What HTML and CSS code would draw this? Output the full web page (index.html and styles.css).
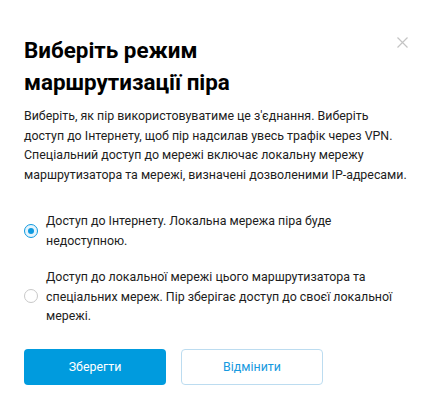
FILE: index.html
```html
<!DOCTYPE html>
<html lang="uk">
<head>
  <meta charset="UTF-8">
  <title>Режим маршрутизації піра</title>
  <link rel="stylesheet" href="styles.css">
</head>
<body>
  <div class="dialog">
    <!-- Header -->
    <div class="dialog-header">
      <h1 class="title">Виберіть режим маршрутизації піра</h1>
      <button class="close" aria-label="Закрити">
        <svg width="11" height="11" viewBox="0 0 11 11">
          <path d="M0.5 0.5 L10.5 10.5 M10.5 0.5 L0.5 10.5" stroke="#c4c4c4" stroke-width="1.2" fill="none"/>
        </svg>
      </button>
    </div>

    <p class="description">Виберіть, як пір використовуватиме це з'єднання. Виберіть доступ до Інтернету, щоб пір надсилав увесь трафік через VPN. Спеціальний доступ до мережі включає локальну мережу маршрутизатора та мережі, визначені дозволеними IP-адресами.</p>

    <!-- Options -->
    <div class="options">
      <label class="option">
        <input type="radio" name="mode" checked>
        <span class="radio"></span>
        <span class="option-text">Доступ до Інтернету. Локальна мережа піра буде недоступною.</span>
      </label>
      <label class="option">
        <input type="radio" name="mode">
        <span class="radio"></span>
        <span class="option-text">Доступ до локальної мережі цього маршрутизатора та спеціальних мереж. Пір зберігає доступ до своєї локальної мережі.</span>
      </label>
    </div>

    <!-- Buttons -->
    <div class="actions">
      <button class="btn btn-primary">Зберегти</button>
      <button class="btn btn-secondary">Відмінити</button>
    </div>
  </div>
</body>
</html>
```

FILE: styles.css
```css
/* General */
body {
  margin: 0;
  background: #fff;
  font-family: Roboto, "Liberation Sans", sans-serif;
  color: #222;
}

.dialog {
  width: 386px;
  padding: 34px 24px 20px 24px;
}

/* Header */
.dialog-header {
  display: flex;
  justify-content: space-between;
  align-items: flex-start;
}

.title {
  margin: 0;
  font-size: 22.4px;
  font-weight: 700;
  line-height: 32px;
  color: #000;
  width: 270px;
}

.close {
  background: none;
  border: none;
  padding: 0;
  margin-top: 3px;
  margin-right: 2px;
  cursor: pointer;
  line-height: 0;
}

.description {
  margin: 8px 0 0 0;
  font-size: 12.4px;
  line-height: 19.5px;
  color: #1d1d1d;
}

/* Options */
.options {
  margin-top: 27px;
  display: flex;
  flex-direction: column;
  gap: 17px;
}

.option {
  display: flex;
  align-items: center;
  cursor: pointer;
}

.option input {
  display: none;
}

.radio {
  flex: none;
  width: 14px;
  height: 14px;
  border: 1px solid #c8c8c8;
  border-radius: 50%;
  box-sizing: border-box;
  margin-right: 8px;
  position: relative;
}

.option input:checked + .radio {
  border-color: #0f9ae0;
  background: #e6f4fc;
}

.option input:checked + .radio::after {
  content: "";
  position: absolute;
  left: 3px;
  top: 3px;
  width: 6px;
  height: 6px;
  border-radius: 50%;
  background: #0f9ae0;
}

.option-text {
  font-size: 12.4px;
  line-height: 19.5px;
  color: #1d1d1d;
  padding-right: 10px;
}

/* Buttons */
.actions {
  margin-top: 23px;
  display: flex;
  gap: 15px;
}

.btn {
  width: 142px;
  height: 36px;
  border-radius: 4px;
  font-family: Roboto, "Liberation Sans", sans-serif;
  font-size: 12.4px;
  cursor: pointer;
}

.btn-primary {
  background: #009bde;
  border: none;
  color: #fff;
}

.btn-secondary {
  background: #fff;
  border: 1px solid #bcdcf0;
  color: #169ae0;
}
```
